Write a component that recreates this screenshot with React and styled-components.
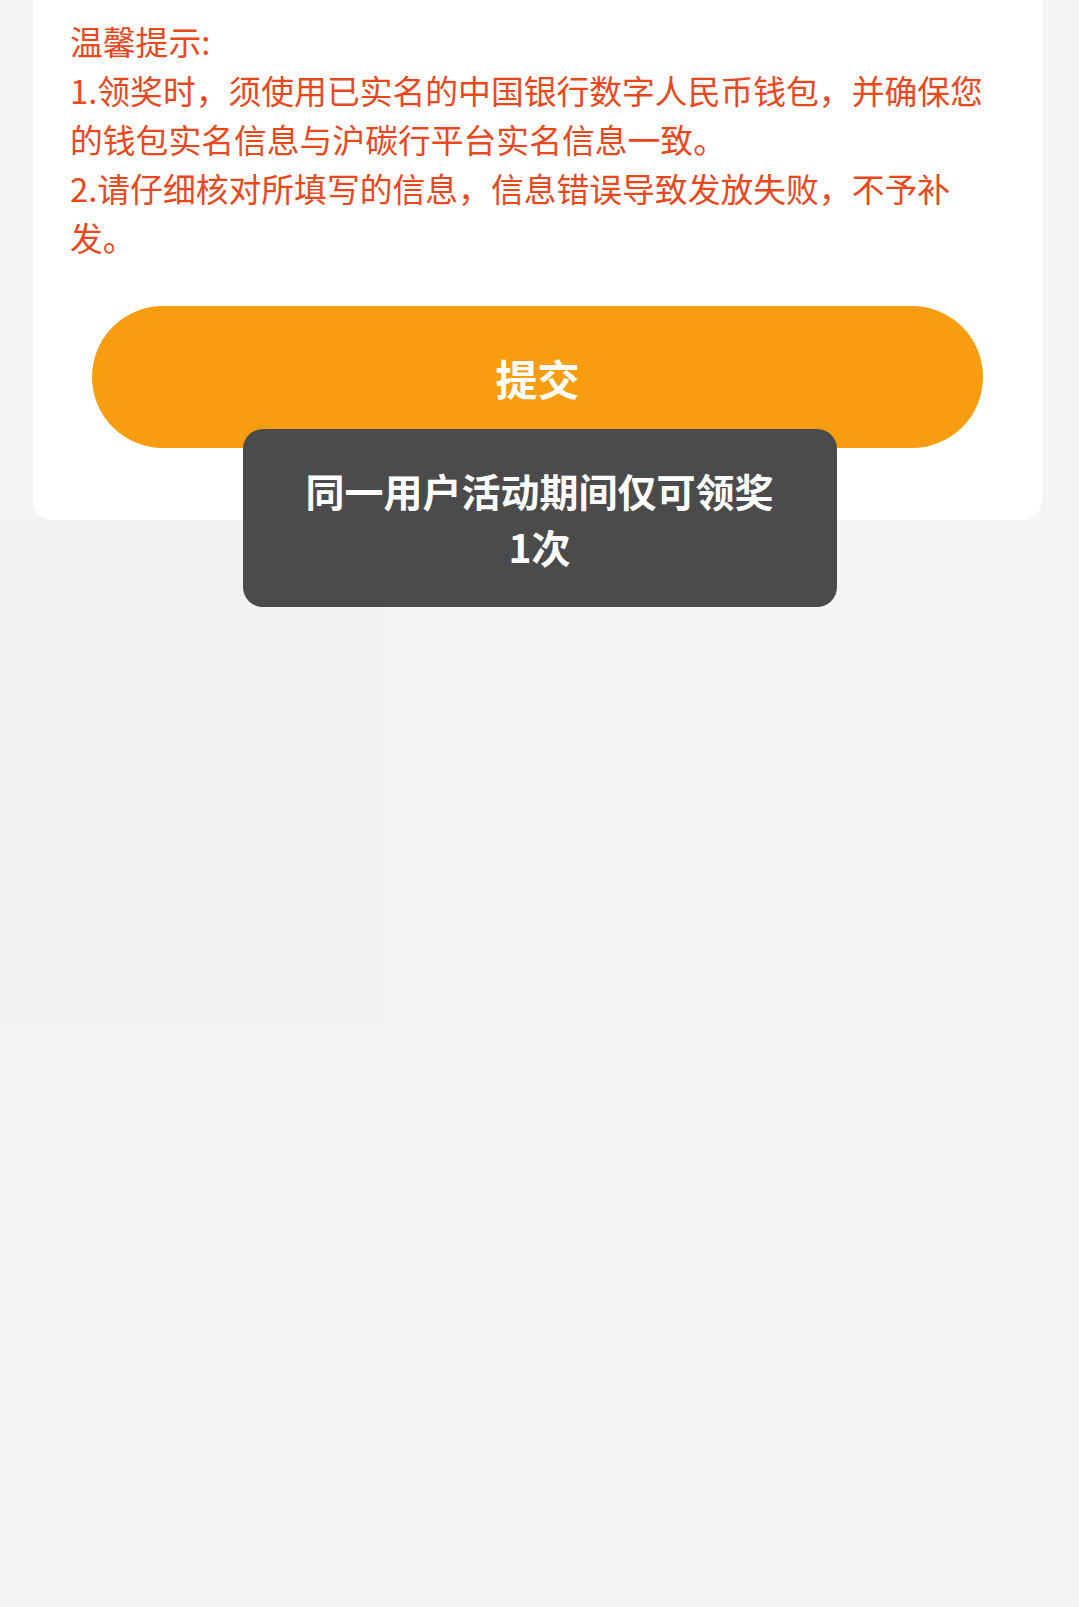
import React from 'react';
import styled, { createGlobalStyle } from 'styled-components';

const GlobalStyle = createGlobalStyle`
  html, body {
    margin: 0;
    padding: 0;
    background-color: #f5f5f5;
    font-family: "Noto Sans CJK SC", "Noto Sans", sans-serif;
  }
`;

const Page = styled.div`
  display: flex;
  flex-direction: column;
  min-height: 1607px;
`;

const Card = styled.div`
  margin: 0 37px 0 33px;
  padding: 16px 37px 72px 37px;
  background-color: #ffffff;
  border-radius: 0 0 20px 20px;
  display: flex;
  flex-direction: column;
`;

const Tips = styled.div`
  color: #e9481e;
  font-size: 32.8px;
  line-height: 49px;
`;

const SubmitButton = styled.button`
  margin: 45px 22px 0 22px;
  height: 142px;
  border: none;
  border-radius: 71px;
  background-color: #f99d10;
  color: #ffffff;
  font-family: "Noto Sans CJK SC", sans-serif;
  font-size: 42px;
  font-weight: 700;
  cursor: pointer;
`;

const Shade = styled.div`
  width: 383px;
  height: 503px;
  background-color: #f2f2f2;
`;

const Toast = styled.div`
  position: fixed;
  top: 429px;
  left: 50%;
  transform: translateX(-50%);
  width: 594px;
  height: 178px;
  box-sizing: border-box;
  padding: 0 60px;
  border-radius: 20px;
  background-color: #4b4b4b;
  display: flex;
  align-items: center;
  justify-content: center;
  text-align: center;
  color: #ffffff;
  font-size: 39px;
  font-weight: 700;
  line-height: 56px;
`;

const tips = [
  '温馨提示:',
  '1.领奖时，须使用已实名的中国银行数字人民币钱包，并确保您的钱包实名信息与沪碳行平台实名信息一致。',
  '2.请仔细核对所填写的信息，信息错误导致发放失败，不予补发。',
];

export default function App() {
  return (
    <>
      <GlobalStyle />
      <Page>
        <Card>
          <Tips>
            {tips.map(t => (
              <div key={t}>{t}</div>
            ))}
          </Tips>
          <SubmitButton>提交</SubmitButton>
        </Card>
        <Shade />
      </Page>
      <Toast>同一用户活动期间仅可领奖1次</Toast>
    </>
  );
}
